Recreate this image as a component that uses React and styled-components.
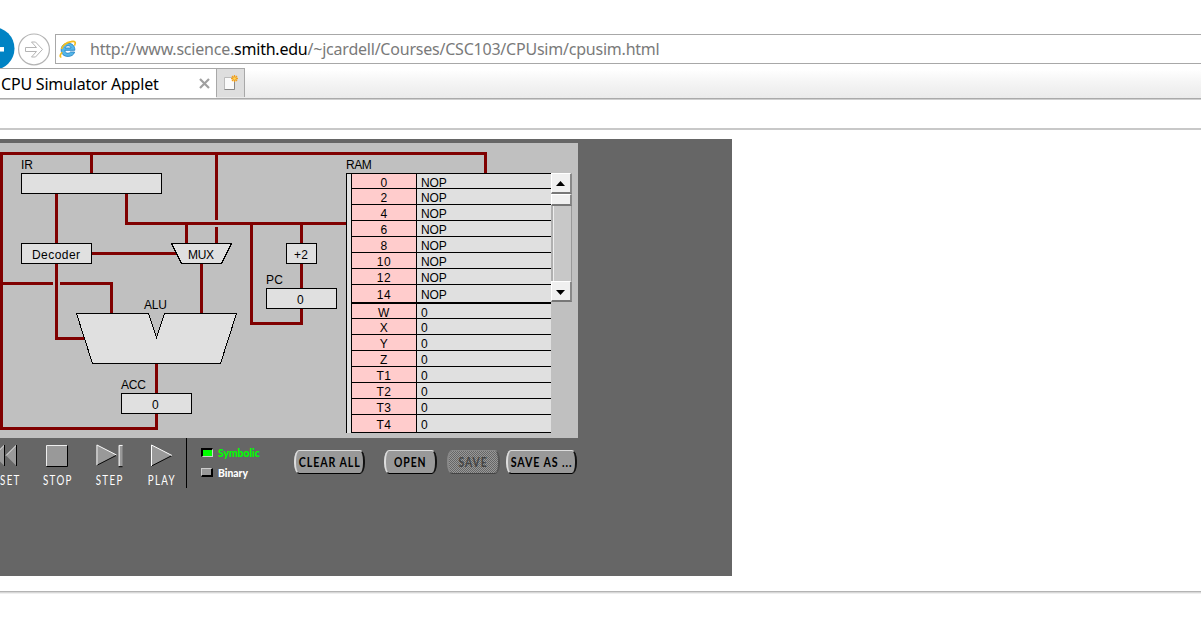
import React from 'react';
import styled, { createGlobalStyle } from 'styled-components';

const GlobalStyle = createGlobalStyle`
  * { box-sizing: border-box; }
  body { margin: 0; background: #fff; overflow: hidden; }
`;

const Browser = styled.div`
  width: 1201px;
  height: 625px;
  overflow: hidden;
  background: #fff;
  display: flex;
  flex-direction: column;
  font-family: 'Noto Sans', 'Open Sans', sans-serif;
`;

const NavBar = styled.header`
  display: flex;
  height: 68px;
  padding-top: 26px;
`;

const NavIcons = styled.svg`
  width: 55px;
  height: 42px;
  flex: none;
`;

const AddressBox = styled.div`
  flex: 1;
  height: 30px;
  margin: 8px -2px 0 0;
  border: 1px solid #a8a8a8;
  display: flex;
  align-items: center;
  padding-left: 3px;
`;

const IeLogo = styled.svg`
  width: 18px;
  height: 18px;
  margin-right: 13px;
  flex: none;
`;

const Url = styled.span`
  font-size: 16px;
  line-height: 28px;
  letter-spacing: -0.22px;
  color: #7a7a7a;
  white-space: nowrap;
`;

const Domain = styled.span`
  color: #000;
`;

const TabStrip = styled.nav`
  display: flex;
  height: 30px;
  background: linear-gradient(#fff 5%, #f4f4f4 50%, #ebebeb);
`;

const Tab = styled.div`
  width: 216px;
  background: #fff;
  border-top: 1px solid #a8a8a8;
  display: flex;
  align-items: center;
  justify-content: space-between;
  padding: 0 6px 0 1px;
  font-size: 16px;
  line-height: 28px;
  letter-spacing: -0.2px;
  color: #000;
  white-space: nowrap;
`;

const CloseIcon = styled.svg`
  width: 11px;
  height: 11px;
`;

const NewTab = styled.div`
  width: 29px;
  height: 29px;
  border: 1px solid #a8a8a8;
  border-bottom: 0;
  background: #dedede;
  padding: 5px 0 0 6px;
`;

const NewTabIcon = styled.svg`
  display: block;
  width: 18px;
  height: 18px;
`;

const Toolbar = styled.div`
  height: 32px;
  border-top: 1px solid #aaa;
  border-bottom: 2px solid #c8c8c8;
  box-shadow: inset 0 1px #cfcfcf;
`;

const Page = styled.main`
  height: 461px;
  padding-top: 9px;
`;

const Applet = styled.section`
  width: 732px;
  height: 437px;
  padding-top: 4px;
  background: #666;
`;

const Footer = styled.footer`
  height: 3px;
  background: linear-gradient(#b4b4b4 33%, #d8d8d8 33% 66%, #efefef 66%);
`;

const Board = styled.div`
  position: relative;
  width: 578px;
  height: 295px;
  background: #c0c0c0;
  display: flex;
  padding: 14px 0 0 346px;
  font-family: 'Liberation Sans', Arial, sans-serif;
  font-size: 12px;
  color: #000;
`;

const Diagram = styled.svg`
  position: absolute;
  left: 0;
  top: 0;
  width: 578px;
  height: 295px;
  pointer-events: none;
  text {
    font-family: 'Liberation Sans', Arial, sans-serif;
    font-size: 12px;
    fill: #000;
  }
`;

const Memory = styled.div`
  width: 205px;
`;

const MemoryTitle = styled.div`
  height: 16px;
  line-height: 16px;
  letter-spacing: -0.5px;
`;

const MemoryTable = styled.div`
  height: 260px;
  border-top: 1px solid #000;
  border-left: 1px solid #000;
  background: #e0e0e0;
  padding-left: 4px;
`;

const MemoryRow = styled.div`
  display: flex;
  height: ${(p) => p.$height}px;
  border-bottom: ${(p) => (p.$thick ? 2 : 1)}px solid #000;
  border-left: 1px solid #000;
  line-height: ${(p) => (p.$height > 17 ? 20 : 18)}px;
`;

const Address = styled.div`
  width: 65px;
  background: #ffcccc;
  border-right: 1px solid #000;
  text-align: center;
  letter-spacing: 0.5px;
`;

const Value = styled.div`
  flex: 1;
  padding-left: 4px;
  letter-spacing: -0.1px;
`;

const ScrollBar = styled.div`
  width: 21px;
  height: 129px;
  margin-top: 16px;
  background: #c8c8c8;
  border-left: 2px solid #b0b0b0;
  border-right: 1px solid #999;
  display: flex;
  flex-direction: column;
`;

const ScrollPiece = styled.div`
  height: ${(p) => p.$height}px;
  margin: 0 -1px 0 -2px;
  padding: ${(p) => p.$drop || 0}px 2px 0 0;
  background: #f0f0f0;
  border: solid;
  border-width: 1px 2px 2px 1px;
  border-color: #fff #888 #777 #fff;
  display: flex;
  align-items: center;
  justify-content: center;
`;

const Track = styled.div`
  flex: 1;
  border-left: 1px solid #eee;
`;

const Controls = styled.div`
  display: flex;
  height: 50px;
`;

const Transport = styled.div`
  display: flex;
  width: 187px;
  border-right: 1px solid #000;
`;

const TransportButton = styled.div`
  width: ${(p) => p.$width}px;
  flex: none;
  display: flex;
  flex-direction: column;
  align-items: ${(p) => (p.$edge ? 'flex-start' : 'center')};
  padding-top: 6px;
`;

const TransportLabel = styled.span`
  font: 13px/16px Lato, 'Open Sans', sans-serif;
  letter-spacing: 1.8px;
  margin: ${(p) => (p.$drop ? -1 : -2)}px -2px 0 0;
  color: #fff;
  white-space: nowrap;
  transform: scaleX(0.75);
  transform-origin: ${(p) => (p.$edge ? 'left' : 'center')};
`;

const Modes = styled.div`
  width: 107px;
  padding: 7px 0 0 14px;
`;

const Mode = styled.div`
  display: flex;
  align-items: center;
  gap: 5px;
  height: 16px;
  margin-bottom: 4px;
  color: ${(p) => (p.$on ? '#00ff00' : '#fff')};
  font: 900 12px/14px Lato, 'Open Sans', sans-serif;
`;

const ModeName = styled.span`
  margin-top: -1px;
  transform: scaleX(0.86);
  transform-origin: left;
`;

const Lamp = styled.span`
  width: 12px;
  height: 9px;
  margin-top: -2px;
  border: solid;
  border-width: ${(p) => (p.$on ? '2px 1px 1px 2px' : '1px 2px 2px 1px')};
  border-color: ${(p) => (p.$on ? '#000 #ccc #ccc #000' : '#ccc #000 #000 #ccc')};
  background: ${(p) => (p.$on ? '#00ff00' : '#999')};
`;

const FileButton = styled.div`
  display: flex;
  justify-content: center;
  width: ${(p) => p.$width}px;
  height: 24px;
  margin: 12px ${(p) => p.$gap}px 0 0;
  border-radius: 5px / 11px;
  border: solid;
  border-width: 1px 2px 1px 2px;
  border-color: ${(p) => (p.$disabled ? '#888 #555 #444 #888' : '#ddd #111 #000 #ddd')};
  background: ${(p) =>
    p.$disabled ? 'repeating-conic-gradient(#989898 0 25%, #666 0 50%) 0 0 / 2px 2px' : '#999'};
  color: ${(p) => (p.$disabled ? '#444' : '#000')};
`;

const FileButtonText = styled.span`
  flex: none;
  font: bold 13px/23px Lato, sans-serif;
  letter-spacing: 1.1px;
  margin-right: 0;
  white-space: nowrap;
  transform: scaleX(${(p) => p.$scale});
`;

const memory = [
  ['0', 'NOP', 15], ['2', 'NOP', 16], ['4', 'NOP', 16], ['6', 'NOP', 16],
  ['8', 'NOP', 16], ['10', 'NOP', 16], ['12', 'NOP', 16], ['14', 'NOP', 19],
  ['W', '0', 15], ['X', '0', 16], ['Y', '0', 16], ['Z', '0', 16],
  ['T1', '0', 16], ['T2', '0', 16], ['T3', '0', 16], ['T4', '0', 18],
];

const fileButtons = [
  { name: 'CLEAR ALL', width: 71, gap: 19, scale: 0.82 },
  { name: 'OPEN', width: 53, gap: 10, scale: 0.8 },
  { name: 'SAVE', width: 53, gap: 6, scale: 0.8, disabled: true },
  { name: 'SAVE AS ...', width: 71, gap: 0, scale: 0.82 },
];

const wires = [
  'M156.5 414V428.5H1.5V153.5H485.5V173',
  'M91.5 153V173',
  'M56.5 194V243',
  'M126.5 194V223.5H346',
  'M216.5 153V220M216.5 227V243',
  'M186.5 223V243',
  'M92 253.5H177',
  'M56.5 264V338.5H85',
  'M2 283.5H53M60 283.5H111.5V313',
  'M201.5 264V313',
  'M251.5 223V323.5H301.5V309',
  'M301.5 223V243M301.5 264V288',
  'M156.5 363V393',
];

const boxes = [
  [21.5, 173.5, 140], [21.5, 243.5, 70], [286.5, 243.5, 30],
  [266.5, 288.5, 70], [121.5, 393.5, 70],
];

const labels = [
  ['IR', 21, 169, 12], ['Decoder', 32, 259, 48], ['MUX', 188, 259, 26],
  ['+2', 294, 259, 14], ['PC', 266, 284, 17], ['0', 297, 304, 7],
  ['ALU', 144, 309, 23], ['ACC', 121, 389, 25], ['0', 152, 409, 7],
];

function Schematic() {
  return (
    <Diagram viewBox="0 143 578 295">
      <g fill="none" stroke="#800000" strokeWidth="3" strokeLinejoin="round" shapeRendering="crispEdges">
        {wires.map((d) => <path key={d} d={d} />)}
      </g>
      <g fill="#e0e0e0" stroke="#000" shapeRendering="crispEdges">
        {boxes.map(([x, y, w]) => <rect key={`${x}-${y}`} x={x} y={y} width={w} height="20" />)}
        <path d="M171.5 243.5H231.5L221.5 263.5H181.5Z" />
        <path d="M76.5 313.5H148.5L156.5 337.5L164.5 313.5H236.5L220.5 363.5H92.5Z" />
      </g>
      {labels.map(([t, x, y, w]) => (
        <text key={`${t}-${x}`} x={x} y={y} textLength={w}>{t}</text>
      ))}
    </Diagram>
  );
}

export default function App() {
  return (
    <Browser>
      <GlobalStyle />
      <NavBar>
        <NavIcons viewBox="0 26 55 42">
          <circle cx="-7" cy="48.5" r="21.5" fill="#0083c4" />
          <path d="M-2 49.3H4" stroke="#fff" strokeWidth="4.5" />
          <circle cx="34" cy="49.4" r="15.4" fill="#fff" stroke="#b4b4b4" strokeWidth="1.2" />
          <path d="M25.5 47.5H36.5L31.5 42H35.5L42.5 49.4L35.5 57H31.5L36.5 51.5H25.5Z" fill="#fff" stroke="#b4b4b4" />
        </NavIcons>
        <AddressBox>
          <IeLogo viewBox="0 0 18 18">
            <path d="M14.1 10.3H5.9C6 12.2 7 13.3 8.9 13.3C10.1 13.3 10.9 12.8 11.4 12H15.6C14.8 14.9 12.3 16.4 9.1 16.4C4.8 16.4 2.2 13.9 2.2 9.9C2.2 5.9 5 3.3 9 3.3C13.4 3.3 16 6 15.8 10.3ZM6 8H12C11.8 6.5 10.8 5.7 9.1 5.7C7.4 5.7 6.3 6.5 6 8Z" fill="#54b6e9" stroke="#2683c4" strokeWidth=".9" />
            <path d="M3.2 12.3C.8 15 .7 17 2.4 16.8M2.6 9C4 4.5 9 2.2 12.2 1.6C16 .6 17.2 2.4 15.4 5.6" fill="none" stroke="#f4bd20" strokeWidth="1.7" />
          </IeLogo>
          <Url>http://www.science.<Domain>smith.edu</Domain>/~jcardell/Courses/CSC103/CPUsim/cpusim.html</Url>
        </AddressBox>
      </NavBar>
      <TabStrip>
        <Tab>
          <span>CPU Simulator Applet</span>
          <CloseIcon viewBox="0 0 11 11">
            <path d="M1 1L10 10M10 1L1 10" stroke="#a0a0a0" strokeWidth="2.2" />
          </CloseIcon>
        </Tab>
        <NewTab>
          <NewTabIcon viewBox="0 0 18 18">
            <path d="M1.5 3.5H11.5V15.5H1.5Z" fill="#fafafa" stroke="#bbb" />
            <path d="M1.5 15.5H11.5V6" fill="none" stroke="#888" />
            <path d="M11.5 1V8M8 4.5H15M9 2L14 7M14 2L9 7" stroke="#f0a020" strokeWidth="1.3" />
            <circle cx="11.5" cy="4.5" r="1.3" fill="#ffd659" />
          </NewTabIcon>
        </NewTab>
      </TabStrip>
      <Toolbar />
      <Page>
        <Applet>
          <Board>
            <Memory>
              <MemoryTitle>RAM</MemoryTitle>
              <MemoryTable>
                {memory.map(([name, value, height]) => (
                  <MemoryRow key={name} $height={height} $thick={name === '14'}>
                    <Address>{name}</Address>
                    <Value>{value}</Value>
                  </MemoryRow>
                ))}
              </MemoryTable>
            </Memory>
            <ScrollBar>
              <ScrollPiece $height={21}>
                <svg width="9" height="5"><path d="M0 5L4.5 0L9 5Z" /></svg>
              </ScrollPiece>
              <ScrollPiece $height={12} />
              <Track />
              <ScrollPiece $height={21} $drop={2}>
                <svg width="9" height="5"><path d="M0 0L4.5 5L9 0Z" /></svg>
              </ScrollPiece>
            </ScrollBar>
            <Schematic />
          </Board>
          <Controls>
            <Transport>
              <TransportButton $width={30} $edge>
                <svg width="30" height="30" viewBox="0 444 30 30">
                  <path d="M-6 455.5L4.5 445V466ZM6 455.5L16.5 445V466Z" fill="#999" />
                  <path d="M-6 455.5L4.5 445M6 455.5L16.5 445" stroke="#eee" />
                  <path d="M4.5 445V466M16.5 445V466" stroke="#000" />
                </svg>
                <TransportLabel $edge>SET</TransportLabel>
              </TransportButton>
              <TransportButton $width={54}>
                <svg width="24" height="30" viewBox="45 444 24 30">
                  <path d="M46.5 445.5H67.5V466.5H46.5Z" fill="#999" />
                  <path d="M46.5 466V445.5H67" fill="none" stroke="#eee" />
                  <path d="M46.5 466.5H67.5V445.5" fill="none" stroke="#000" />
                </svg>
                <TransportLabel>STOP</TransportLabel>
              </TransportButton>
              <TransportButton $width={50}>
                <svg width="28" height="30" viewBox="95 444 28 30">
                  <path d="M96.5 445V466L117 455.5Z" fill="#999" />
                  <path d="M96.5 466L117 455.5" stroke="#000" />
                  <path d="M96.5 466V445L117 455.5" fill="none" stroke="#fff" />
                  <path d="M119 445H123V467H119Z" fill="#999" />
                  <path d="M119.5 467V445.5H123" fill="none" stroke="#fff" />
                  <path d="M119 467.5H123" fill="none" stroke="#000" />
                </svg>
                <TransportLabel $drop>STEP</TransportLabel>
              </TransportButton>
              <TransportButton $width={54}>
                <svg width="24" height="30" viewBox="149 444 24 30">
                  <path d="M151.5 445V466L172 455.5Z" fill="#999" />
                  <path d="M151.5 466L172 455.5" stroke="#000" />
                  <path d="M151.5 466V445L172 455.5" fill="none" stroke="#fff" />
                </svg>
                <TransportLabel>PLAY</TransportLabel>
              </TransportButton>
            </Transport>
            <Modes>
              <Mode $on><Lamp $on /><ModeName>Symbolic</ModeName></Mode>
              <Mode><Lamp /><ModeName>Binary</ModeName></Mode>
            </Modes>
            {fileButtons.map(({ name, width, gap, scale, disabled }) => (
              <FileButton key={name} $width={width} $gap={gap} $disabled={disabled}>
                <FileButtonText $scale={scale}>{name}</FileButtonText>
              </FileButton>
            ))}
          </Controls>
        </Applet>
      </Page>
      <Footer />
    </Browser>
  );
}
